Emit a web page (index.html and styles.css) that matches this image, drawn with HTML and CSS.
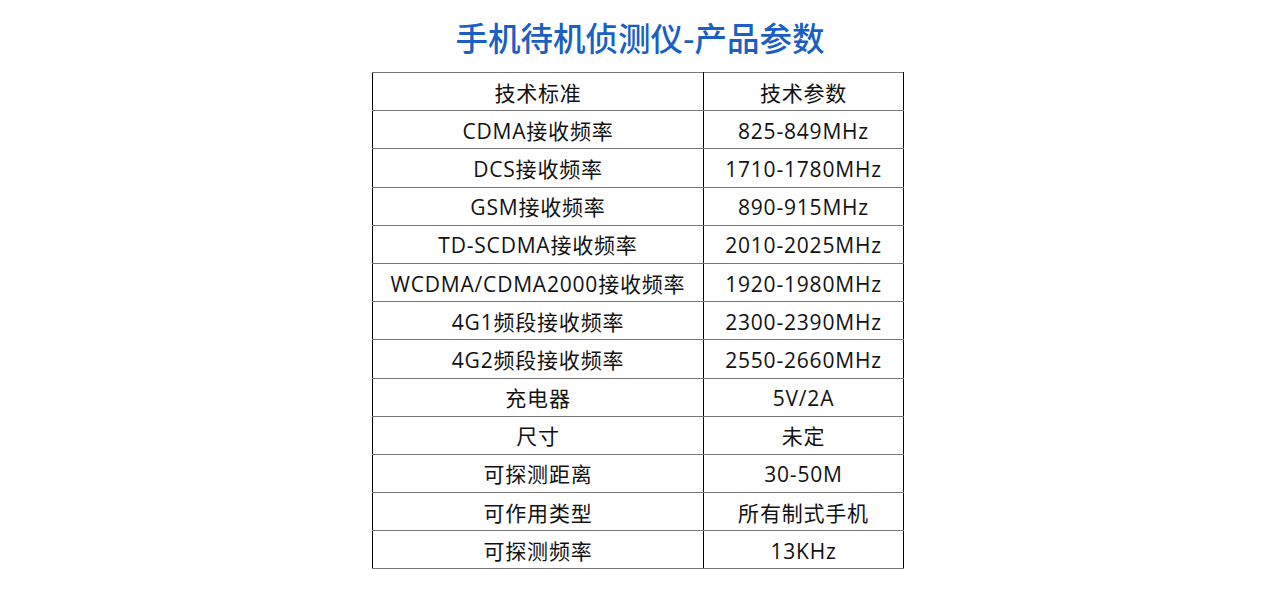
FILE: index.html
```html
<!DOCTYPE html>
<html lang="zh-CN">
<head>
<meta charset="utf-8">
<title>手机待机侦测仪-产品参数</title>
<link rel="stylesheet" href="styles.css">
</head>
<body>
<div class="page">
  <h1 class="title">手机待机侦测仪-产品参数</h1>
  <table class="spec">
    <tbody>
      <tr><td>技术标准</td><td>技术参数</td></tr>
      <tr><td>CDMA接收频率</td><td>825-849MHz</td></tr>
      <tr><td>DCS接收频率</td><td>1710-1780MHz</td></tr>
      <tr><td>GSM接收频率</td><td>890-915MHz</td></tr>
      <tr><td>TD-SCDMA接收频率</td><td>2010-2025MHz</td></tr>
      <tr><td>WCDMA/CDMA2000接收频率</td><td>1920-1980MHz</td></tr>
      <tr><td>4G1频段接收频率</td><td>2300-2390MHz</td></tr>
      <tr><td>4G2频段接收频率</td><td>2550-2660MHz</td></tr>
      <tr><td>充电器</td><td>5V/2A</td></tr>
      <tr><td>尺寸</td><td>未定</td></tr>
      <tr><td>可探测距离</td><td>30-50M</td></tr>
      <tr><td>可作用类型</td><td>所有制式手机</td></tr>
      <tr><td>可探测频率</td><td>13KHz</td></tr>
    </tbody>
  </table>
</div>
</body>
</html>
```
FILE: styles.css
```css
html, body {
  margin: 0;
  padding: 0;
  background: #ffffff;
}
.page {
  width: 1280px;
  display: flex;
  flex-direction: column;
  align-items: center;
  font-family: "Open Sans", "Noto Sans CJK SC", sans-serif;
  color: #111;
}
.title {
  margin: 14px 0 0 0;
  height: 58px;
  line-height: 46px;
  font-family: "Noto Sans CJK SC", sans-serif;
  font-size: 32.5px;
  font-weight: 500;
  color: #1a5fc4;
}
.spec {
  width: 532px;
  margin-right: 4px;
  border-collapse: collapse;
  table-layout: fixed;
  font-size: 21px;
  letter-spacing: 0.8px;
}
.spec td {
  height: 38.2px;
  box-sizing: border-box;
  padding: 2px 0 0 0;
  text-align: center;
  vertical-align: middle;
  line-height: 30px;
  border-top: 1px solid #777;
  border-bottom: 1px solid #777;
  border-left: 1px solid #000;
  border-right: 1px solid #000;
  white-space: nowrap;
}
.spec td:first-child {
  width: 331px;
}
```
